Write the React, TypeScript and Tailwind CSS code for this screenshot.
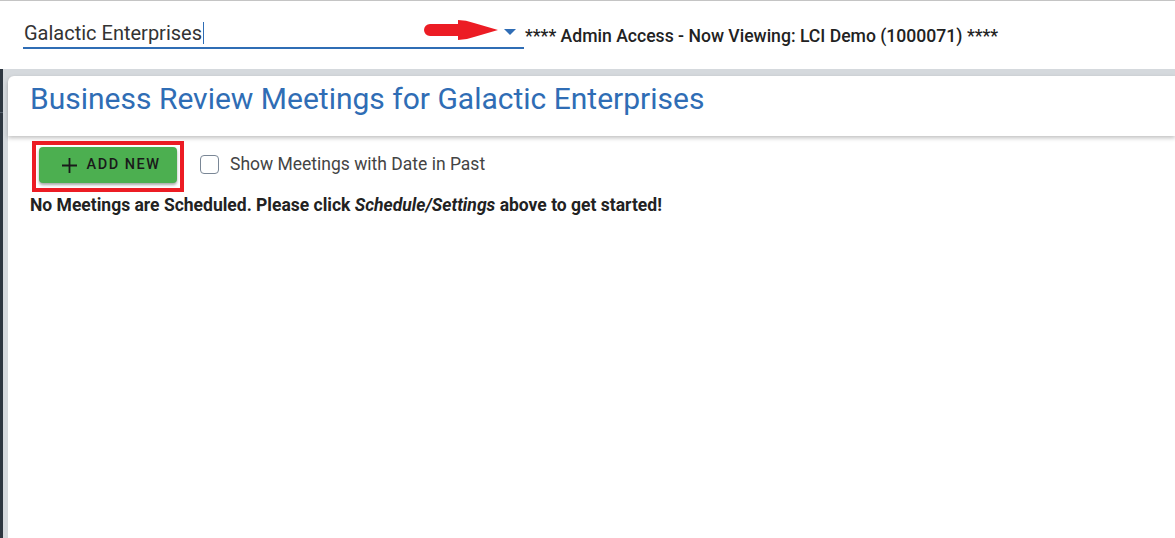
import React from "react";

const RedArrow = () => (
  <svg width="76" height="22" viewBox="0 0 76 22" className="absolute left-[424px] top-[18px]">
    <path
      d="M6 5 H34 L34 1 Q42 1 50 4 L74 11 L50 18 Q42 21 34 21 L34 17 H6 A6 6 0 0 1 6 5 Z"
      fill="#ec1c24"
    />
  </svg>
);

const App: React.FC = () => {
  return (
    <div className="w-full h-[538px] overflow-hidden bg-white font-['Roboto',sans-serif] border-t border-[#c4c4c4]">
      {/* Top bar */}
      <div className="relative h-[68px] flex items-start">
        <div className="ml-[23px] mt-[14px] w-[501px] h-[34px] pt-[4px] border-b-2 border-[#2f6db5] flex items-center relative">
          <span className="pl-[1px] text-[20px] text-[#333] leading-none">Galactic Enterprises</span>
          <span className="w-[1px] h-[22px] bg-[#2f6db5] ml-[1px]" />
          <span className="absolute right-[8px] top-[14px] w-0 h-0 border-l-[6px] border-r-[6px] border-t-[6px] border-l-transparent border-r-transparent border-t-[#2f6db5]" />
        </div>
        <RedArrow />
        <span className="ml-[1px] mt-[23px] text-[17.6px] leading-[24px] font-medium text-[#222]">
          **** Admin Access - Now Viewing: LCI Demo (1000071) ****
        </span>
      </div>

      {/* Body */}
      <div className="flex h-[470px]">
        <div className="w-[3px] bg-[#2d3640] flex flex-col">
          <div className="h-[43px]" />
          <div className="h-[1px] bg-[#55606b]" />
        </div>
        <div className="w-[5px] bg-[#d5d9dd]" />
        <div className="flex-1 flex flex-col">
          <div className="bg-[#d5d9dd] pt-[7px]">
            <div className="relative z-10 h-[60px] bg-white rounded-tl-[6px] shadow-[0_2px_4px_rgba(0,0,0,0.25)] pl-[22px] pt-[8px]">
              <h1 className="text-[30px] text-[#2f6db5] leading-[30px]">
                Business Review Meetings for Galactic Enterprises
              </h1>
            </div>
          </div>
          <div className="bg-white flex-1 pl-[24px] pt-[5px]">
            <div className="flex items-start">
              <div className="border-[4px] border-[#ec1c24] pt-[2px] px-[3px] pb-[5px]">
                <button className="w-[138px] h-[36px] pl-[5px] bg-[#4caf50] rounded-[4px] shadow-[0_2px_3px_rgba(0,0,0,0.35)] flex items-center justify-center gap-[9px] text-[14.5px] font-medium tracking-[1.5px] text-[#1a1a1a]">
                  <svg width="17" height="17" viewBox="0 0 17 17">
                    <path d="M8.5 1 V16 M1 8.5 H16" stroke="#1a1a1a" strokeWidth="1.8" />
                  </svg>
                  ADD NEW
                </button>
              </div>
              <div className="ml-[16px] mt-[14px] w-[19px] h-[19px] border border-[#7a8796] rounded-[4px]" />
              <span className="ml-[11px] mt-[10px] text-[17.5px] leading-[26px] text-[#444]">
                Show Meetings with Date in Past
              </span>
            </div>
            <p className="mt-0 -ml-[2px] text-[17.5px] font-bold text-[#222]">
              No Meetings are Scheduled. Please click <i>Schedule/Settings</i> above to get started!
            </p>
          </div>
        </div>
      </div>
    </div>
  );
};

export default App;
